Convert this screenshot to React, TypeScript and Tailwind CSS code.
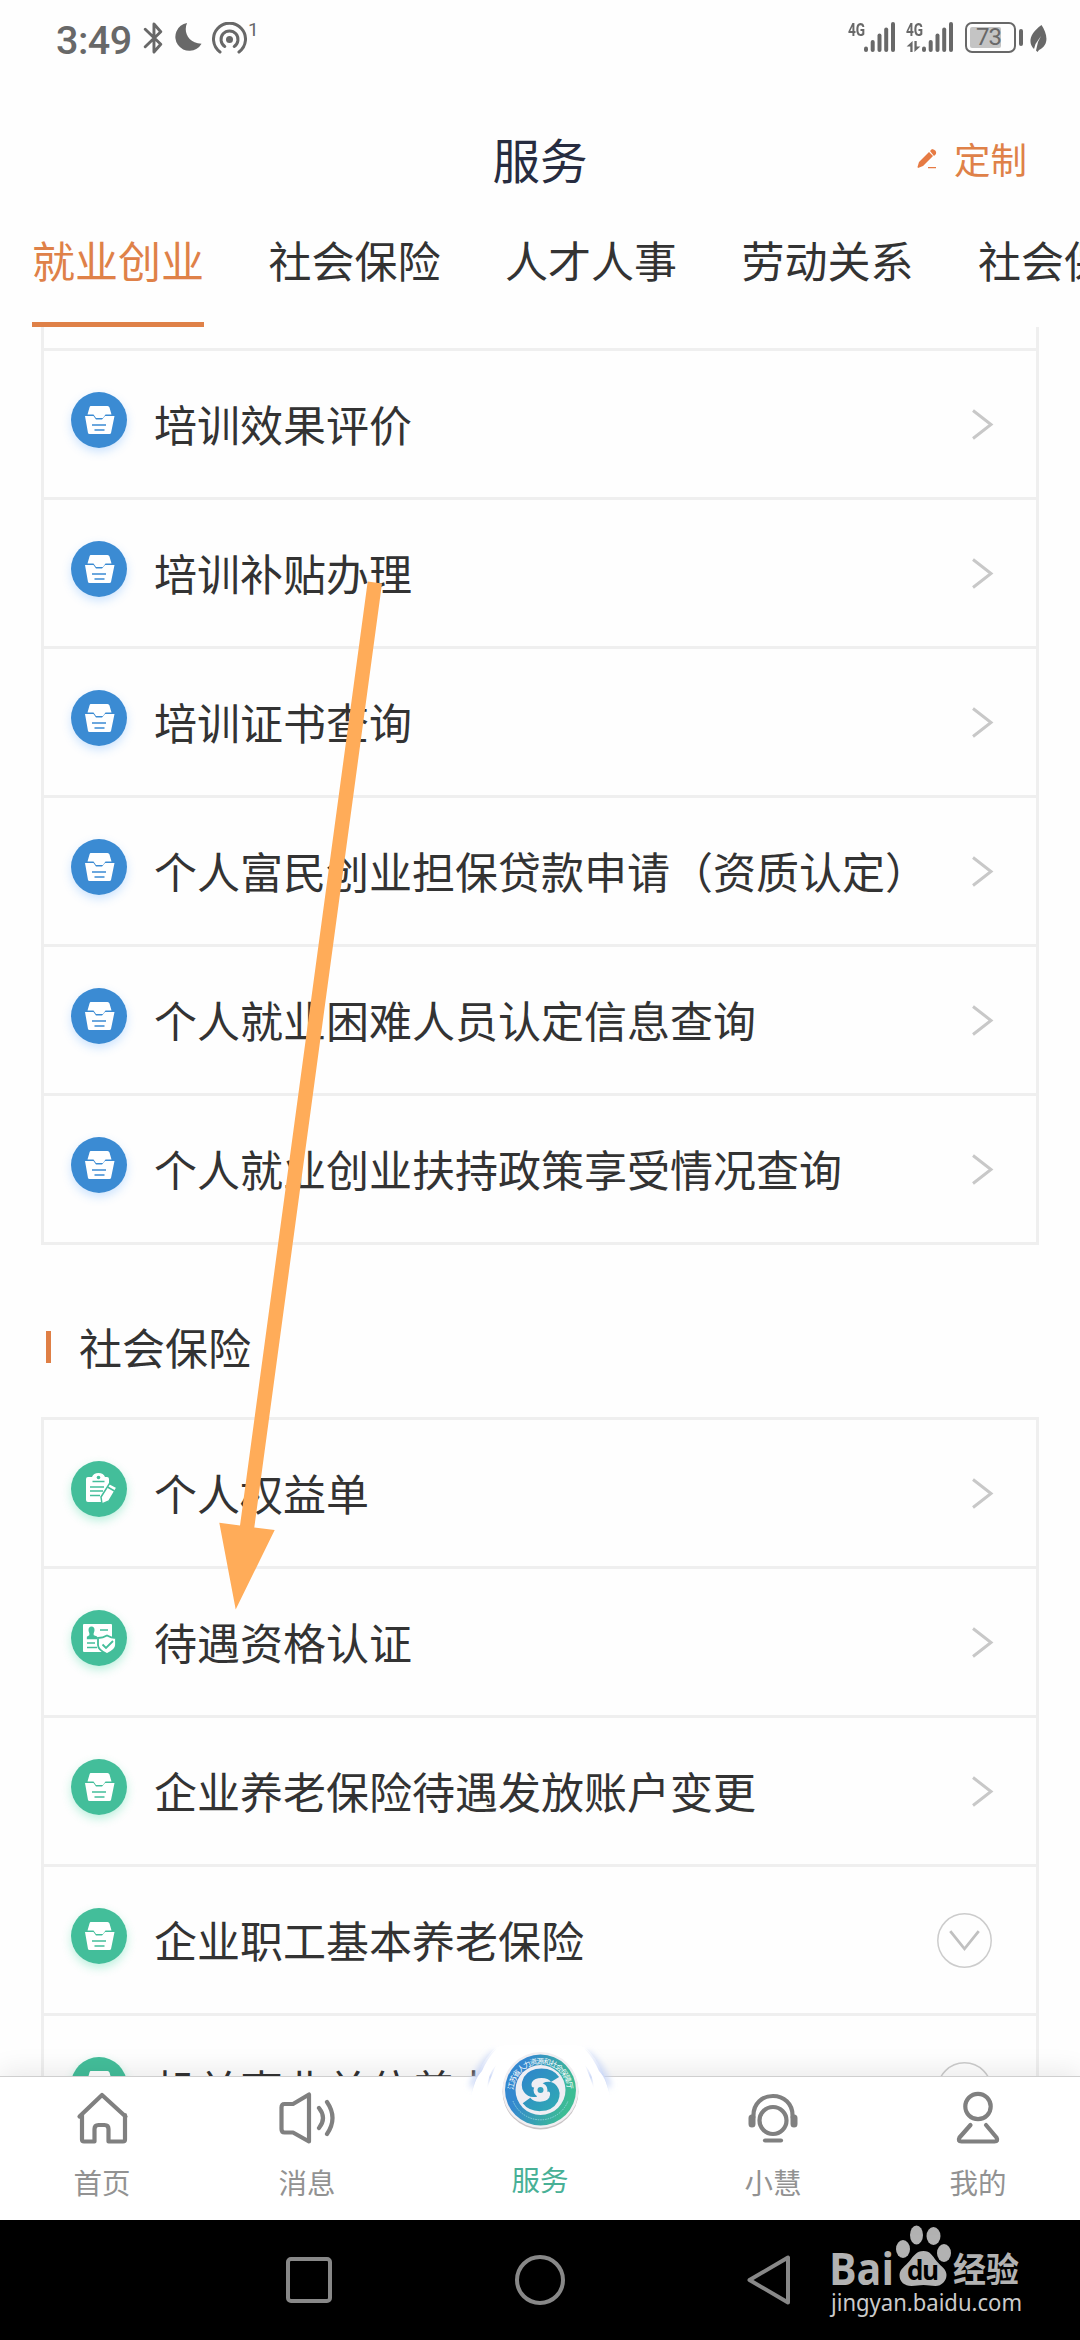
import type { ReactNode } from 'react'

type IconKind = 'box' | 'clipboard' | 'idcard'

interface Item {
  label: string
  icon?: IconKind
  expandable?: boolean
}

const TABS = ['就业创业', '社会保险', '人才人事', '劳动关系', '社会保障卡']

const JOB_ITEMS: Item[] = [
  { label: '培训效果评价' },
  { label: '培训补贴办理' },
  { label: '培训证书查询' },
  { label: '个人富民创业担保贷款申请（资质认定）' },
  { label: '个人就业困难人员认定信息查询' },
  { label: '个人就业创业扶持政策享受情况查询' },
]

const INSURANCE_ITEMS: Item[] = [
  { label: '个人权益单', icon: 'clipboard' },
  { label: '待遇资格认证', icon: 'idcard' },
  { label: '企业养老保险待遇发放账户变更' },
  { label: '企业职工基本养老保险', expandable: true },
  { label: '机关事业单位养老保险', expandable: true },
]

/* ---------- Status bar ---------- */

function SignalBars() {
  return (
    <svg width="32" height="30" viewBox="0 0 32 30" fill="#686868">
      <rect x="0" y="24.500" width="4" height="5.500" rx="2" />
      <rect x="6.700" y="18" width="4" height="12" rx="2" />
      <rect x="13.500" y="11.500" width="4" height="18.500" rx="2" />
      <rect x="20.200" y="5.500" width="4" height="24.500" rx="2" />
      <rect x="27" y="0" width="4" height="30" rx="2" />
    </svg>
  )
}

function StatusBar() {
  return (
    <div className="flex h-[74px] justify-between pl-[56px] pr-[33px] pt-[22px] text-[#686868]">
      <div className="flex items-start">
        <span className="w-[87px] whitespace-nowrap font-['Roboto',sans-serif] text-[39.5px] font-medium leading-[37px] tracking-[-0.5px]">3:49</span>
        <svg width="20" height="32" viewBox="0 0 20 33" fill="none" stroke="#686868" strokeWidth="3" strokeLinejoin="round" strokeLinecap="round">
          <path d="M2 7.500l16 15.500-7 8V2l7 8L2 25.500" />
        </svg>
        <svg className="ml-[11px] mt-px" width="28" height="30" viewBox="0 0 28 31" fill="#686868">
          <path d="M13 0C9 9 14 21 28 21.500A14.500 14.500 0 1 1 13 0z" />
        </svg>
        <svg className="ml-[10px]" width="35" height="32" viewBox="0 0 35 32" fill="none" stroke="#686868" strokeWidth="3" strokeLinecap="round">
          <circle cx="17.500" cy="17.500" r="3.500" fill="#686868" stroke="none" />
          <path d="M12.800 24.500a8.500 8.500 0 1 1 9.400 0" />
          <path d="M8 30a16 16 0 1 1 19 0" />
        </svg>
        <span className="ml-[1px] font-['Roboto',sans-serif] text-[19px] leading-[16px]">1</span>
      </div>
      <div className="flex items-start font-['Roboto',sans-serif]">
        <span className="w-[16px] origin-left scale-x-[0.72] text-[19px] font-bold leading-[15px]">4G</span>
        <SignalBars />
        <div className="ml-[10px] flex w-[16px] flex-col">
          <span className="origin-left scale-x-[0.72] text-[19px] font-bold leading-[15px]">4G</span>
          <svg className="mt-[4px]" width="15" height="11" viewBox="0 0 15 12" fill="#686868">
            <path d="M6.500 0v12H4V6H0zM8.500 0H11v6h4l-6.500 6z" />
          </svg>
        </div>
        <SignalBars />
        <div className="ml-[11px] flex h-[31px] w-[51px] rounded-[7px] border-[2.500px] border-[#686868] p-[3px]">
          <div className="h-full w-[31px] rounded-[2px] bg-[#c4c4c4] text-right text-[24px] leading-[20px] tracking-[-1px]">73</div>
        </div>
        <div className="ml-[3px] mt-[7px] h-[17px] w-[4px] rounded-full bg-[#686868]" />
        <svg className="ml-[7px] mt-[3px]" width="17" height="27" viewBox="0 0 17 27">
          <path d="M11.500 0C17 8 20 20 9 25L7.500 27 6 25.500 8 17l3-6-5.500 8L4 24C-2 18-1 9 11.500 0z" fill="#686868" />
        </svg>
      </div>
    </div>
  )
}

/* ---------- Service list ---------- */

function ServiceIcon({ kind, color }: { kind: IconKind; color: string }) {
  return (
    <svg width="56" height="56" viewBox="0 0 56 56">
      <circle cx="28" cy="28" r="28" fill={color} />
      {kind === 'box' && (
        <>
          <path d="M19.500 14h17q1.500 0 2 1.500l2 7h-6l-2.500 3.500h-7L22.500 22.500H16.500l2-7q.3-1.500 1-1.500z" fill="#fff" />
          <path d="M14 24h8.500l2.500 3.500h6L34 24h9.500l-3.500 17q-.3 1-1.500 1h-20q-1.200 0-1.500-1z" fill="#fff" />
          <path d="M21 33h14M23.500 38h10" stroke={color} strokeWidth="1.500" />
        </>
      )}
      {kind === 'clipboard' && (
        <>
          <path d="M15 18q0-2 2-2h4q1.500-4 6.500-4t6.500 4h2q2 0 2 2v23H17q-2 0-2-2z" fill="#fff" />
          <circle cx="27.500" cy="16.500" r="1.800" fill={color} />
          <path d="M21.500 20.500h12M19 26h14M19 30h13M19 34.500h10" stroke={color} strokeWidth="1.500" />
          <path d="M38.500 22.500l7.500 4-8 13.500-7 3-1-7z" fill="#fff" stroke={color} strokeWidth="1.500" />
          <path d="M36.500 26l7 4" stroke={color} strokeWidth="1.500" />
        </>
      )}
      {kind === 'idcard' && (
        <>
          <rect x="12" y="14" width="29" height="28" rx="1" fill="#fff" />
          <ellipse cx="20.500" cy="20" rx="3" ry="3.500" fill={color} />
          <path d="M19 22h3v3.500l3.500 1.500v1.500h-9V27l2.500-1.500zM29 20h8M16 33h8M16 37.500h10" fill={color} stroke={color} strokeWidth="1.300" />
          <path d="M27 28q5 0 9-2.500 4 2.500 9 2.500v7q0 5-9 9-9-4-9-9z" fill="#fff" stroke={color} strokeWidth="1.800" />
          <path d="M31.500 34.500l3.500 3.500 7-7" fill="none" stroke={color} strokeWidth="1.800" />
        </>
      )}
    </svg>
  )
}

function ServiceRow({ item, theme }: { item: Item; theme: 'blue' | 'green' }) {
  const glow =
    theme === 'blue' ? 'shadow-[0_4px_10px_rgba(60,150,255,0.25)]' : 'shadow-[0_4px_10px_rgba(40,210,150,0.3)]'
  return (
    <li className="flex h-[149px] shrink-0 border-t-[3px] border-[#efefef] pl-[27px] pr-[42px]">
      <div className={`mt-[41px] size-[56px] shrink-0 rounded-full ${glow}`}>
        <ServiceIcon kind={item.icon ?? 'box'} color={theme === 'blue' ? '#3b8bd3' : '#43be9a'} />
      </div>
      <span className="ml-[27px] mt-[40px] flex-1 whitespace-nowrap text-[43px] leading-[64px] text-[#333]">{item.label}</span>
      {item.expandable ? (
        <svg className="mr-[2px] mt-[46px]" width="55" height="55" viewBox="0 0 56 56" fill="none">
          <circle cx="28" cy="28" r="27.200" stroke="#ccc" strokeWidth="1.500" />
          <path d="M13.500 18.500L28 36.500l14.500-18" stroke="#c0c0c0" strokeWidth="2.800" />
        </svg>
      ) : (
        <svg className="mt-[58px]" width="24" height="31" viewBox="0 0 24 31" fill="none">
          <path d="M3 1.500l18 14-18 14" stroke="#c8c8c8" strokeWidth="3" />
        </svg>
      )}
    </li>
  )
}

/* ---------- Bottom navigation ---------- */

function NavItem({ label, children }: { label: string; children: ReactNode }) {
  return (
    <div className="flex w-[80px] flex-col items-center">
      <svg className="mt-[14px] shrink-0" width="58" height="58" viewBox="0 0 58 58" fill="none" stroke="#808080" strokeWidth="4.200" strokeLinecap="round" strokeLinejoin="round">
        {children}
      </svg>
      <span className="mt-[13px] text-[28.500px] leading-[40px] text-[#929292]">{label}</span>
    </div>
  )
}

function ServiceLogo() {
  return (
    <svg className="absolute left-[-41px] top-[-32px]" width="162" height="90" viewBox="0 0 162 90">
      <defs>
        <linearGradient id="ring" x1="0" y1="0" x2="1" y2="0.3">
          <stop offset="0.3" stopColor="#3488cf" />
          <stop offset="1" stopColor="#3dbd94" />
        </linearGradient>
        <linearGradient id="swirl" x1="62" y1="28" x2="98" y2="64" gradientUnits="userSpaceOnUse">
          <stop offset="0" stopColor="#2f86cb" />
          <stop offset="1" stopColor="#2fa9b4" />
        </linearGradient>
        <linearGradient id="arcFade" x1="0" y1="0" x2="0" y2="1">
          <stop offset="0" stopColor="#e6ebfa" stopOpacity="0.3" />
          <stop offset="0.5" stopColor="#cdd9f7" />
          <stop offset="1" stopColor="#e6ebfa" stopOpacity="0" />
        </linearGradient>
        <filter id="haze" x="-50%" y="-50%" width="200%" height="200%">
          <feGaussianBlur stdDeviation="3" />
        </filter>
        <path id="rim" d="M54.500 46A27 27 0 0 1 108.500 46" />
      </defs>
      <path d="M36 8Q20 20 13 42M127 8q16 12 23 34" fill="none" stroke="#c3d2f5" strokeWidth="5" filter="url(#haze)" />
      <path d="M38 2Q81-8 125 2q22 18 27 60H11Q16 20 38 2z" fill="#fff" />
      <path d="M38 3Q17 18 11 56q4-22 12-30Q28 14 38 3z" fill="url(#arcFade)" />
      <path d="M125 3q21 15 27 53-4-22-12-30Q135 14 125 3z" fill="url(#arcFade)" />
      <path d="M37 20q-8 9-9 24 4-12 9-24zM126 20q8 9 9 24-4-12-9-24z" fill="url(#arcFade)" />
      <circle cx="81.500" cy="46.500" r="38" fill="#c9c4c6" />
      <circle cx="81.500" cy="45" r="38" fill="#f1eff2" />
      <circle cx="81.500" cy="45" r="35.500" fill="url(#ring)" />
      <circle cx="81.500" cy="45" r="25" fill="#efeef4" />
      <text fill="#fff" fontSize="7.500" fontFamily="'Noto Sans CJK SC', sans-serif">
        <textPath href="#rim" startOffset="1" textLength="82">江苏省人力资源和社会保障厅</textPath>
      </text>
      <path d="M54 56a29.500 29.500 0 0 0 55 0" fill="none" stroke="#8cd3dd" strokeWidth="1" strokeDasharray="1.500 1" />
      <path d="M96 34.500C91 26 74 26 69 34.500c-4 8 1 14 8 12.500" fill="none" stroke="url(#swirl)" strokeWidth="9.500" />
      <path d="M67.500 55.500c6 8 22 8 27-1 4-9-2-15-9-12" fill="none" stroke="url(#swirl)" strokeWidth="9.500" />
      <circle cx="81.500" cy="45" r="7" fill="#efeef4" />
      <circle cx="81.500" cy="45" r="3" fill="#35a0be" />
    </svg>
  )
}

function BottomNav() {
  return (
    <nav className="relative flex h-[144px] shrink-0 justify-between border-t border-[#cfcfcf] bg-white pl-[62px] pr-[62px] shadow-[0_-6px_24px_rgba(0,0,0,0.08)]">
      <NavItem label="首页">
        <path d="M6.500 25.500L29 4 52.500 25.500M9 24v24.500q0 2 2 2h10.500V38q0-4 4-4h6q4 0 4 4v12.500H50q2 0 2-2V24" />
      </NavItem>
      <NavItem label="消息">
        <path d="M31 3.500v47L15 41.500H6.500Q3.500 41.500 3.500 38V16.500q0-3.500 3-3.500H15zM41 17q8 10 0 20M49 11q11 16 0 32" />
      </NavItem>
      <div className="relative ml-[28px] mr-[28px] flex w-[80px] flex-col items-center">
        <ServiceLogo />
        <span className="mt-[82px] text-[28.500px] leading-[40px] text-[#48b096]">服务</span>
      </div>
      <NavItem label="小慧">
        <path d="M9.500 26C8-2 50-2 48.500 26" />
        <circle cx="29" cy="29.500" r="13.500" />
        <path d="M21 49.500h16" />
        <path d="M8 27v6M50 27v6" strokeWidth="7" />
      </NavItem>
      <NavItem label="我的">
        <circle cx="29" cy="15.500" r="12.700" />
        <path d="M21.500 34L10.500 46.500q-2 4 2 4h33q4 0 2-4L37 34" />
      </NavItem>
    </nav>
  )
}

/* ---------- System bar with watermark ---------- */

function BaiduMark() {
  return (
    <svg className="ml-[38px] mt-[5px] shrink-0" width="200" height="100" viewBox="0 0 200 100" fill="#b2b2b2">
      <text x="0" y="60" fontSize="44" fontWeight="700" fontFamily="'Open Sans', sans-serif" textLength="65" lengthAdjust="spacingAndGlyphs">Bai</text>
      <ellipse cx="74" cy="24" rx="7" ry="9" />
      <ellipse cx="87.500" cy="10" rx="6.500" ry="9.500" />
      <ellipse cx="104.500" cy="11" rx="7" ry="9" />
      <ellipse cx="115" cy="28" rx="7" ry="9" />
      <path d="M94.500 26c7 0 9 5 13 10 5 6 10 8 10 14s-5 11-11 11c-5 0-7-1-12-1s-7 1-12 1c-7 0-12-4-12-11 0-6 6-9 10-14s7-10 14-10z" />
      <text x="78" y="55" fill="#000" fontSize="26" fontWeight="700" fontFamily="'Open Sans', sans-serif" textLength="32">du</text>
      <text x="124" y="57" fontSize="34" fontWeight="700" fontFamily="'Noto Sans CJK SC', sans-serif" textLength="66" lengthAdjust="spacingAndGlyphs">经验</text>
      <text x="2" y="85.500" fill="#cbcbcb" fontSize="23" fontFamily="'Noto Sans', sans-serif" textLength="191" lengthAdjust="spacingAndGlyphs">jingyan.baidu.com</text>
    </svg>
  )
}

function SystemBar() {
  return (
    <div className="flex h-[120px] shrink-0 bg-black pl-[286px]">
      <div className="mt-[37px] h-[46px] w-[46px] rounded-[5px] border-[4px] border-[#888]" />
      <div className="ml-[183px] mt-[35px] size-[50px] rounded-full border-[4px] border-[#888]" />
      <svg className="ml-[182px] mt-[35px] shrink-0" width="44" height="50" viewBox="0 0 44 50" fill="none" stroke="#888" strokeWidth="4" strokeLinejoin="round">
        <path d="M2.500 25L41 2.500v45z" />
      </svg>
      <BaiduMark />
    </div>
  )
}

export default function App() {
  return (
    <div className="relative flex h-[2340px] w-[1080px] flex-col overflow-hidden bg-[#fefefe] font-['Noto_Sans_CJK_SC',sans-serif]">
      <StatusBar />

      <header className="grid h-[141px] grid-cols-3 pt-[49px]">
        <h1 className="col-start-2 text-center text-[47.500px] leading-[72px] text-[#272c40]">服务</h1>
        <div className="flex justify-end pr-[53px] text-[#df8148]">
          <svg className="mr-[17px] mt-[26px]" width="20" height="20" viewBox="0 0 20 20" fill="#e67a43">
            <path d="M13 2l2-2q5 1 4 5l-2 2zM12 3l4 4L6 17l-5 2-.5-1L2 13zM11 18h8v1.300h-8z" />
          </svg>
          <span className="text-[36.500px] leading-[72px]">定制</span>
        </div>
      </header>

      {/* Category tabs */}
      <div className="flex h-[112px] shrink-0 gap-[64.500px] overflow-hidden pl-[32px] text-[43px]">
        {TABS.map((tab, i) => (
          <span
            key={i}
            className={
              i === 0
                ? 'h-full shrink-0 whitespace-nowrap border-b-[5px] border-[#df8148] pt-[12px] leading-[64px] text-[#df8148]'
                : 'shrink-0 whitespace-nowrap pt-[12px] leading-[64px] text-[#333]'
            }
          >
            {tab}
          </span>
        ))}
      </div>

      <main className="min-h-0 flex-1 overflow-hidden pl-[41px] pr-[41px]">
        <ul className="border-x-[3px] border-b-[3px] border-[#efefef] pt-[21px]">
          {JOB_ITEMS.map(item => (
            <ServiceRow key={item.label} item={item} theme="blue" />
          ))}
        </ul>

        <div className="flex h-[172px] items-center pb-[10px] pl-[5px] pt-[40px]">
          <span className="mt-px h-[32px] w-[5px] bg-[#df7f45]" />
          <h2 className="ml-[28px] text-[43px] leading-[64px] text-[#333]">社会保险</h2>
        </div>

        <ul className="border-x-[3px] border-[#efefef]">
          {INSURANCE_ITEMS.map(item => (
            <ServiceRow key={item.label} item={item} theme="green" />
          ))}
        </ul>
      </main>

      <BottomNav />
      <SystemBar />

      {/* Guide arrow drawn over the list */}
      <svg className="pointer-events-none absolute left-0 top-0" width="1080" height="2340" viewBox="0 0 1080 2340">
        <path d="M367.700 581.500l14.300 2L254.300 1527.500l20.400 2.500-39 79.500-16.400-86.800 20.700 2.800z" fill="#ffac59" />
      </svg>
    </div>
  )
}
